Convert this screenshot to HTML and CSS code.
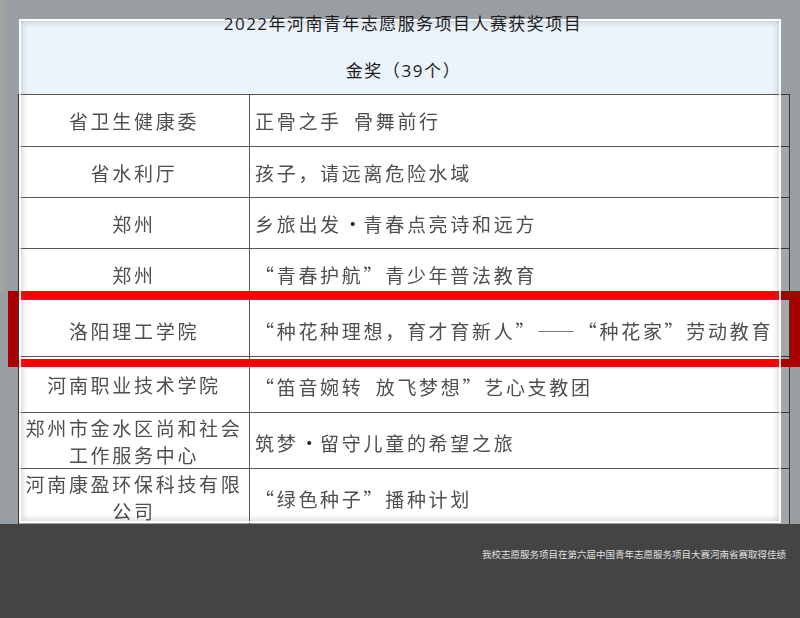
FILE: index.html
```html
<!DOCTYPE html>
<html lang="zh-CN">
<head>
<meta charset="utf-8">
<title>河南青年志愿服务项目大赛获奖项目</title>
<link rel="stylesheet" href="styles.css">
</head>
<body>
<main class="page">
  <section class="stage">
    <header class="heading">
      <h1 class="title">2022年河南青年志愿服务项目人赛获奖项目</h1>
      <h2 class="subtitle">金奖（39个）</h2>
    </header>
    <table class="awards">
      <colgroup><col class="col-org"><col class="col-project"></colgroup>
      <tbody>
        <tr class="row-a"><td class="org">省卫生健康委</td><td class="project">正骨之手&ensp;骨舞前行</td></tr>
        <tr class="row-b"><td class="org">省水利厅</td><td class="project">孩子，请远离危险水域</td></tr>
        <tr class="row-b"><td class="org">郑州</td><td class="project">乡旅出发<span class="dot">•</span>青春点亮诗和远方</td></tr>
        <tr class="row-c"><td class="org">郑州</td><td class="project">“青春护航”青少年普法教育</td></tr>
        <tr class="row-d"><td class="org">洛阳理工学院</td><td class="project">“种花种理想，育才育新人”——“种花家”劳动教育</td></tr>
        <tr class="row-e"><td class="org">河南职业技术学院</td><td class="project">“笛音婉转&ensp;放飞梦想”艺心支教团</td></tr>
        <tr class="row-e"><td class="org">郑州市金水区尚和社会工作服务中心</td><td class="project">筑梦<span class="dot">•</span>留守儿童的希望之旅</td></tr>
        <tr class="row-e"><td class="org">河南康盈环保科技有限公司</td><td class="project">“绿色种子”播种计划</td></tr>
      </tbody>
    </table>
    <div class="highlight"></div>
    <div class="spotlight"></div>
    <div class="edge"></div>
    <div class="strip"></div>
  </section>
  <footer class="caption">
    <p class="caption-text">我校志愿服务项目在第六届中国青年志愿服务项目大赛河南省赛取得佳绩</p>
  </footer>
</main>
</body>
</html>
```
FILE: styles.css
```css
* { box-sizing: border-box; }
html, body { margin: 0; padding: 0; }
body {
  width: 800px;
  height: 618px;
  overflow: hidden;
  font-family: "Noto Sans CJK SC", "Liberation Sans", sans-serif;
  background: #444;
}
.page { display: flex; flex-direction: column; height: 618px; }
.stage {
  position: relative;
  height: 524px;
  overflow: hidden;
  background: #ebf3fb;
}
.heading {
  position: relative;
  z-index: 3;
  height: 94px;
  padding-top: 11px;
  text-align: center;
  color: #1c1c1c;
  font-family: "Open Sans", "Noto Sans CJK SC", sans-serif;
}
.title, .subtitle { margin: 0; font-weight: 400; font-size: 17px; line-height: 26px; }
.title { margin-left: 6px; letter-spacing: 1.45px; }
.subtitle { margin-top: 21px; margin-left: 7px; letter-spacing: 1.6px; }
.awards {
  margin-left: 18px;
  width: 772px;
  table-layout: fixed;
  border-collapse: collapse;
  background: #fff;
  color: #4f4f4f;
  font-size: 19px;
  letter-spacing: 2.7px;
  line-height: 27px;
  text-spacing-trim: space-all;
  filter: blur(0.4px);
}
.col-org { width: 231px; }
.awards td { border: 1px solid #555; padding: 0; }
.org { text-align: center; }
.awards .project { padding-left: 5px; white-space: nowrap; }
.dot { display: inline-block; width: 21.7px; letter-spacing: 0; text-align: center; color: #222; }
.row-a { height: 52px; }
.row-b { height: 51px; }
.row-c { height: 51px; }
.row-d { height: 57px; }
.row-d td { padding-top: 4px; }
.row-e { height: 56px; }
.awards .row-e .project { padding-top: 3px; }
.highlight {
  position: absolute;
  left: 8px;
  top: 291px;
  width: 792px;
  height: 76px;
  border: solid #ff0000;
  border-width: 8px 10px;
}
.spotlight {
  position: absolute;
  z-index: 1;
  left: 19px;
  top: 19px;
  width: 762px;
  height: 504px;
  box-shadow: 0 0 0 900px rgba(0, 0, 0, 0.35);
}
.edge {
  position: absolute;
  z-index: 2;
  left: 19px;
  top: 19px;
  width: 762px;
  height: 504px;
  border: 2px solid rgba(255, 255, 255, 0.85);
  box-shadow: inset 0 0 7px rgba(110, 120, 135, 0.45);
}
.strip {
  position: absolute;
  z-index: 2;
  left: 0;
  top: 0;
  width: 8px;
  height: 291px;
  background: linear-gradient(90deg, rgba(170, 168, 160, 0.75), rgba(170, 168, 160, 0));
}
.caption {
  flex: 1;
  display: flex;
  justify-content: flex-end;
  background: #444;
  padding: 23px 14px 0 0;
}
.caption-text {
  margin: 0;
  color: #e0e0e0;
  font-size: 9.5px;
  line-height: 14px;
}
```
